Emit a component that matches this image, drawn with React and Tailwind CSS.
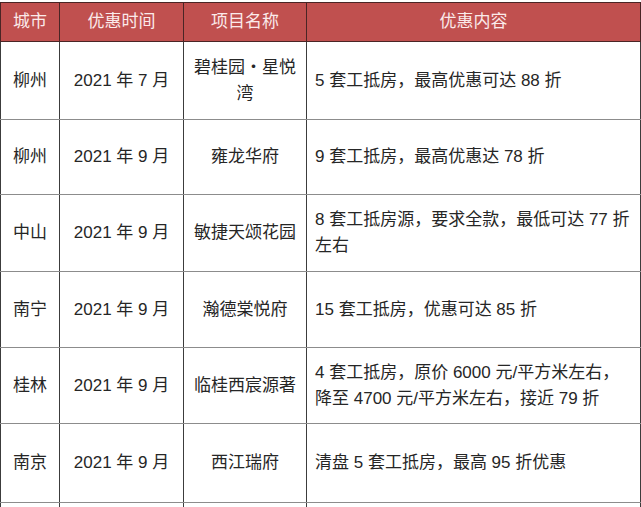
import React from 'react';

const rows = [
  { city: '柳州', date: '2021 年 7 月', name: '碧桂园・星悦湾', info: '5 套工抵房，最高优惠可达 88 折', h: 78 },
  { city: '柳州', date: '2021 年 9 月', name: '雍龙华府', info: '9 套工抵房，最高优惠达 78 折', h: 75 },
  { city: '中山', date: '2021 年 9 月', name: '敏捷天颂花园', info: '8 套工抵房源，要求全款，最低可达 77 折左右', h: 77 },
  { city: '南宁', date: '2021 年 9 月', name: '瀚德棠悦府', info: '15 套工抵房，优惠可达 85 折', h: 76 },
  { city: '桂林', date: '2021 年 9 月', name: '临桂西宸源著', info: '4 套工抵房，原价 6000 元/平方米左右，降至 4700 元/平方米左右，接近 79 折', h: 76 },
  { city: '南京', date: '2021 年 9 月', name: '西江瑞府', info: '清盘 5 套工抵房，最高 95 折优惠', h: 79 },
  { city: '', date: '', name: '', info: '', h: 40 },
];

const cell = 'border-l border-r border-b border-l-[#3c3c3c] border-r-[#3c3c3c] border-b-[#8c8c8c] text-[17px] leading-[26px] text-[#262626]';

export default function App() {
  return (
    <div className="w-[641px] h-[507px] overflow-hidden bg-white pt-[2px]" style={{ fontFamily: '"Liberation Sans", "Noto Sans CJK SC", sans-serif' }}>
      <table className="w-[640px] table-fixed border-collapse">
        <colgroup>
          <col className="w-[59px]" />
          <col className="w-[124px]" />
          <col className="w-[123px]" />
          <col className="w-[334px]" />
        </colgroup>
        <thead>
          <tr className="h-[39px] bg-[#c0504f]">
            {['城市', '优惠时间', '项目名称', '优惠内容'].map((t) => (
              <th key={t} className="border border-[#4a2525] font-normal text-[17px] text-[#fbeaea] text-center">
                {t}
              </th>
            ))}
          </tr>
        </thead>
        <tbody>
          {rows.map((r, i) => (
            <tr key={i} style={{ height: r.h }}>
              <td className={`${cell} text-center`}>{r.city}</td>
              <td className={`${cell} text-center`}>{r.date}</td>
              <td className={`${cell} text-center px-[8px]`}>{r.name}</td>
              <td className={`${cell} text-left px-[8px]`}>{r.info}</td>
            </tr>
          ))}
        </tbody>
      </table>
    </div>
  );
}
